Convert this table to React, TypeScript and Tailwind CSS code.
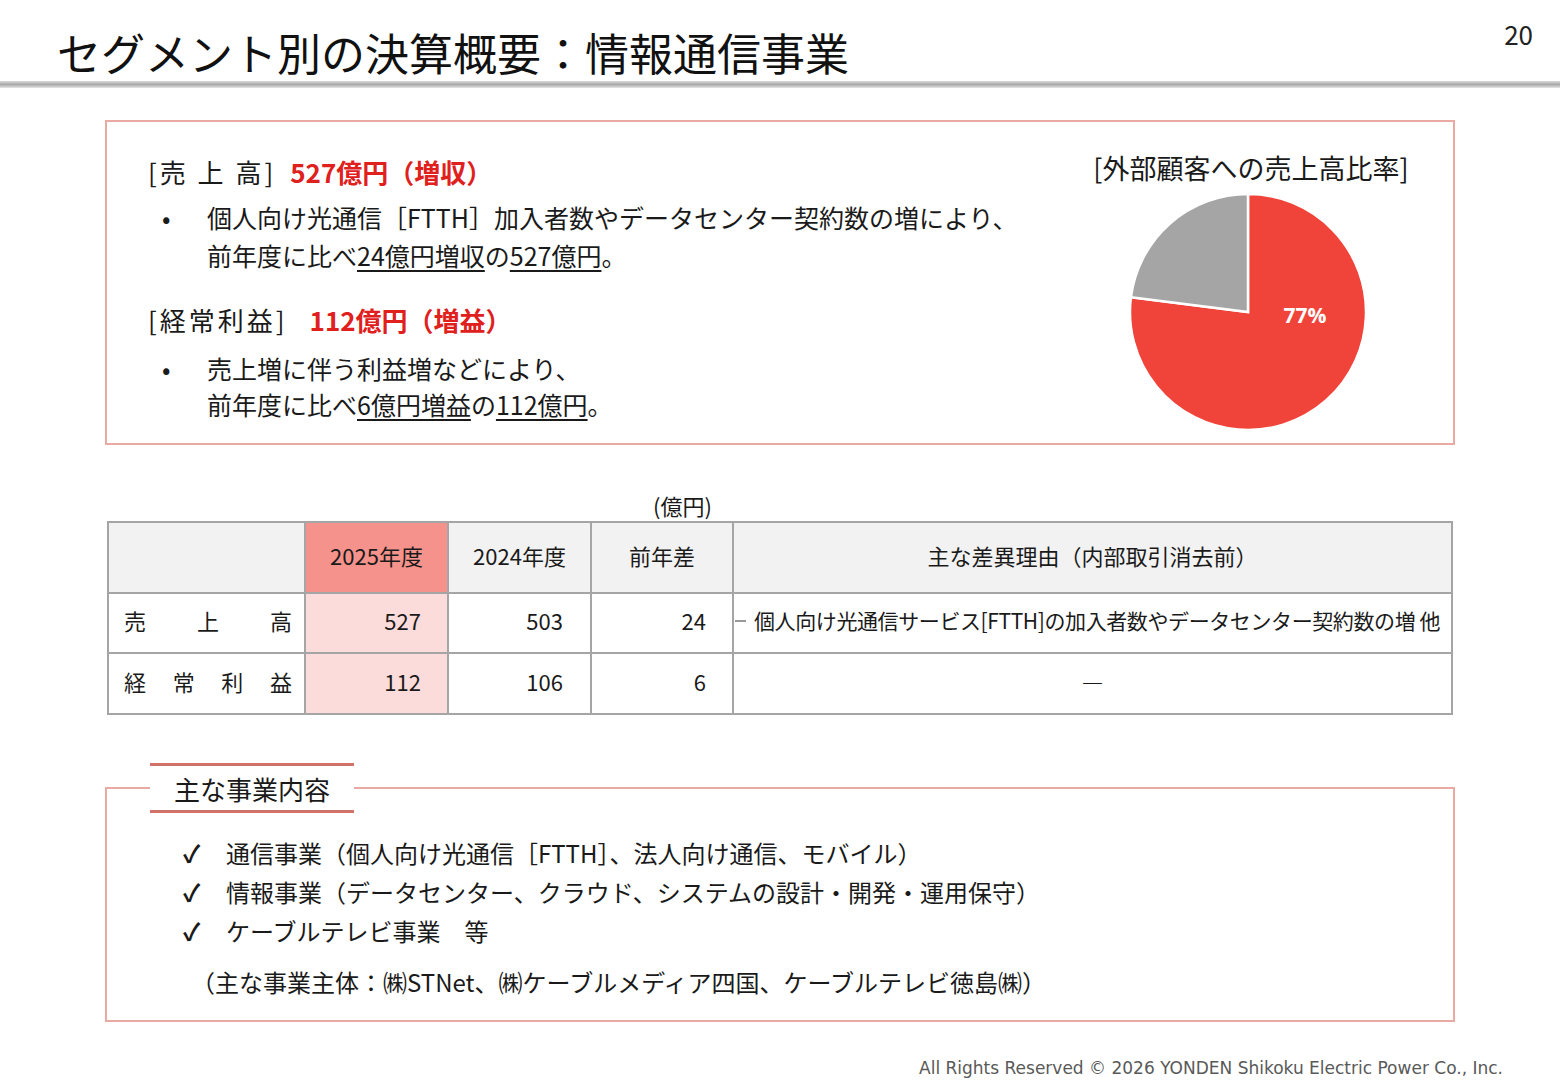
import React from "react";

const FONT = { fontFamily: '"Noto Sans CJK JP", "Noto Sans", sans-serif' };

// pie geometry: 77% red, clockwise from top
const R = 118;
const C = 120;
function pt(frac: number) {
  const a = frac * 2 * Math.PI;
  return [C + R * Math.sin(a), C - R * Math.cos(a)];
}

function Pie() {
  const [ex, ey] = pt(0.77);
  return (
    <svg width="240" height="240" viewBox="0 0 240 240">
      <path
        d={`M${C},${C} L${C},${C - R} A${R},${R} 0 1 1 ${ex},${ey} Z`}
        fill="#f0443a"
        stroke="#ffffff"
        strokeWidth="2.5"
      />
      <path
        d={`M${C},${C} L${ex},${ey} A${R},${R} 0 0 1 ${C},${C - R} Z`}
        fill="#a5a5a5"
        stroke="#ffffff"
        strokeWidth="2.5"
      />
      <text
        x="177"
        y="131"
        textAnchor="middle"
        fill="#ffffff"
        fontSize="21"
        fontWeight="700"
        fontFamily='"Open Sans", "Liberation Sans", sans-serif'
      >
        77%
      </text>
    </svg>
  );
}

const U: React.FC<{ children: React.ReactNode }> = ({ children }) => (
  <span className="underline decoration-[1.5px] underline-offset-[4px]">
    {children}
  </span>
);

function SummaryBox() {
  return (
    <div className="mx-[105px] mt-[32px] h-[327px] border-2 border-[#e9aaa3] flex">
      <div className="flex-1 pl-[41px] pt-[32px] text-[#1a1a1a]">
        <div className="flex items-center text-[26px] leading-[36px]">
          <span className="tracking-[3px]">[売 上 高]</span>
          <span className="ml-[14px] font-bold text-[#e0201c]">527億円（増収）</span>
        </div>
        <div className="mt-[8px] flex text-[25px] leading-[38px]">
          <span className="w-[59px] pl-[14px]">•</span>
          <div>
            <div>個人向け光通信［FTTH］加入者数やデータセンター契約数の増により、</div>
            <div>
              前年度に比べ<U>24億円増収</U>の<U>527億円</U>。
            </div>
          </div>
        </div>
        <div className="mt-[28px] flex items-center text-[26px] leading-[36px]">
          <span className="tracking-[3px]">[経常利益]</span>
          <span className="ml-[22px] font-bold text-[#e0201c]">112億円（増益）</span>
        </div>
        <div className="mt-[12px] flex text-[25px] leading-[36px]">
          <span className="w-[59px] pl-[14px]">•</span>
          <div>
            <div>売上増に伴う利益増などにより、</div>
            <div>
              前年度に比べ<U>6億円増益</U>の<U>112億円</U>。
            </div>
          </div>
        </div>
      </div>
      <div className="w-[380px] flex flex-col items-center pt-[28px] pr-[24px]">
        <div className="text-[27px] leading-[36px] text-[#1a1a1a] whitespace-nowrap">
          [外部顧客への売上高比率]
        </div>
        <div className="mt-[6px] ml-[-6px]">
          <Pie />
        </div>
      </div>
    </div>
  );
}

function ResultTable() {
  const cell = "border-2 border-[#a5a5a5] pb-[5px]";
  return (
    <div className="mx-[107px]">
      <div className="pl-[546px] text-[22px] leading-[28px] text-[#1a1a1a]">(億円)</div>
      <table className="mt-[2px] w-[1346px] border-collapse text-[22px] text-[#1a1a1a] table-fixed">
        <colgroup>
          <col className="w-[197px]" />
          <col className="w-[143px]" />
          <col className="w-[143px]" />
          <col className="w-[142px]" />
          <col />
        </colgroup>
        <tbody>
          <tr className="h-[71px] bg-[#f2f2f2]">
            <td className={cell}></td>
            <td className={`${cell} bg-[#f5928b] text-center`}>2025年度</td>
            <td className={`${cell} text-center`}>2024年度</td>
            <td className={`${cell} text-center`}>前年差</td>
            <td className={`${cell} text-center`}>主な差異理由（内部取引消去前）</td>
          </tr>
          <tr className="h-[60px]">
            <td className={cell}>
              <div className="flex justify-between pl-[15px] pr-[12px]">
                <span>売</span>
                <span>上</span>
                <span>高</span>
              </div>
            </td>
            <td className={`${cell} bg-[#fcdcda] text-right pr-[26px]`}>527</td>
            <td className={`${cell} text-right pr-[27px]`}>503</td>
            <td className={`${cell} text-right pr-[26px]`}>24</td>
            <td className={cell}>
              <div className="flex items-center whitespace-nowrap">
                <span className="shrink-0 w-[11px] h-[2px] bg-[#9a9a9a] ml-[1px] mr-[8px]" />
                <span className="text-[21px] tracking-[-0.4px]">
                  個人向け光通信サービス[FTTH]の加入者数やデータセンター契約数の増 他
                </span>
              </div>
            </td>
          </tr>
          <tr className="h-[61px]">
            <td className={cell}>
              <div className="flex justify-between pl-[15px] pr-[12px]">
                <span>経</span>
                <span>常</span>
                <span>利</span>
                <span>益</span>
              </div>
            </td>
            <td className={`${cell} bg-[#fcdcda] text-right pr-[26px]`}>112</td>
            <td className={`${cell} text-right pr-[27px]`}>106</td>
            <td className={`${cell} text-right pr-[26px]`}>6</td>
            <td className={`${cell} text-center`}>―</td>
          </tr>
        </tbody>
      </table>
    </div>
  );
}

function BusinessBox() {
  const items = [
    "通信事業（個人向け光通信［FTTH］、法人向け通信、モバイル）",
    "情報事業（データセンター、クラウド、システムの設計・開発・運用保守）",
    "ケーブルテレビ事業　等",
  ];
  return (
    <div className="relative mx-[105px] mt-[72px] h-[236px] border-2 border-[#e9aaa3] text-[#1a1a1a]">
      <div className="absolute left-[43px] top-[-26px] w-[204px] h-[50px] bg-white border-y-[3px] border-[#d0716a] flex items-center justify-center text-[26px]">
        主な事業内容
      </div>
      <div className="pt-[44px] pl-[76px]">
        {items.map((t) => (
          <div key={t} className="flex items-center h-[39px] text-[24px]">
            <span className="w-[43px] text-[24px] font-bold">✓</span>
            <span>{t}</span>
          </div>
        ))}
        <div className="mt-[14px] ml-[8px] text-[24px] leading-[36px]">
          （主な事業主体：㈱STNet、㈱ケーブルメディア四国、ケーブルテレビ徳島㈱）
        </div>
      </div>
    </div>
  );
}

export default function App() {
  return (
    <div className="w-[1560px] h-[1080px] bg-white flex flex-col overflow-hidden" style={FONT}>
      <div className="h-[82px] flex justify-between">
        <h1 className="pl-[57px] pt-[24px] text-[44px] leading-[56px] font-normal text-[#111]">
          セグメント別の決算概要：情報通信事業
        </h1>
        <div className="pr-[27px] pt-[16px] text-[26px] leading-[36px] text-[#222]">20</div>
      </div>
      <div className="h-[7px] bg-gradient-to-b from-[#dcdcdc] via-[#a9a9a9] to-[#e6e6e6]" />
      <SummaryBox />
      <div className="mt-[46px]">
        <ResultTable />
      </div>
      <BusinessBox />
      <div className="mt-[34px] pr-[57px] text-right text-[17px] leading-[24px] text-[#595959] whitespace-nowrap" style={{ fontFamily: '"DejaVu Sans", sans-serif' }}>
        All Rights Reserved © 2026 YONDEN Shikoku Electric Power Co., Inc.
      </div>
    </div>
  );
}
